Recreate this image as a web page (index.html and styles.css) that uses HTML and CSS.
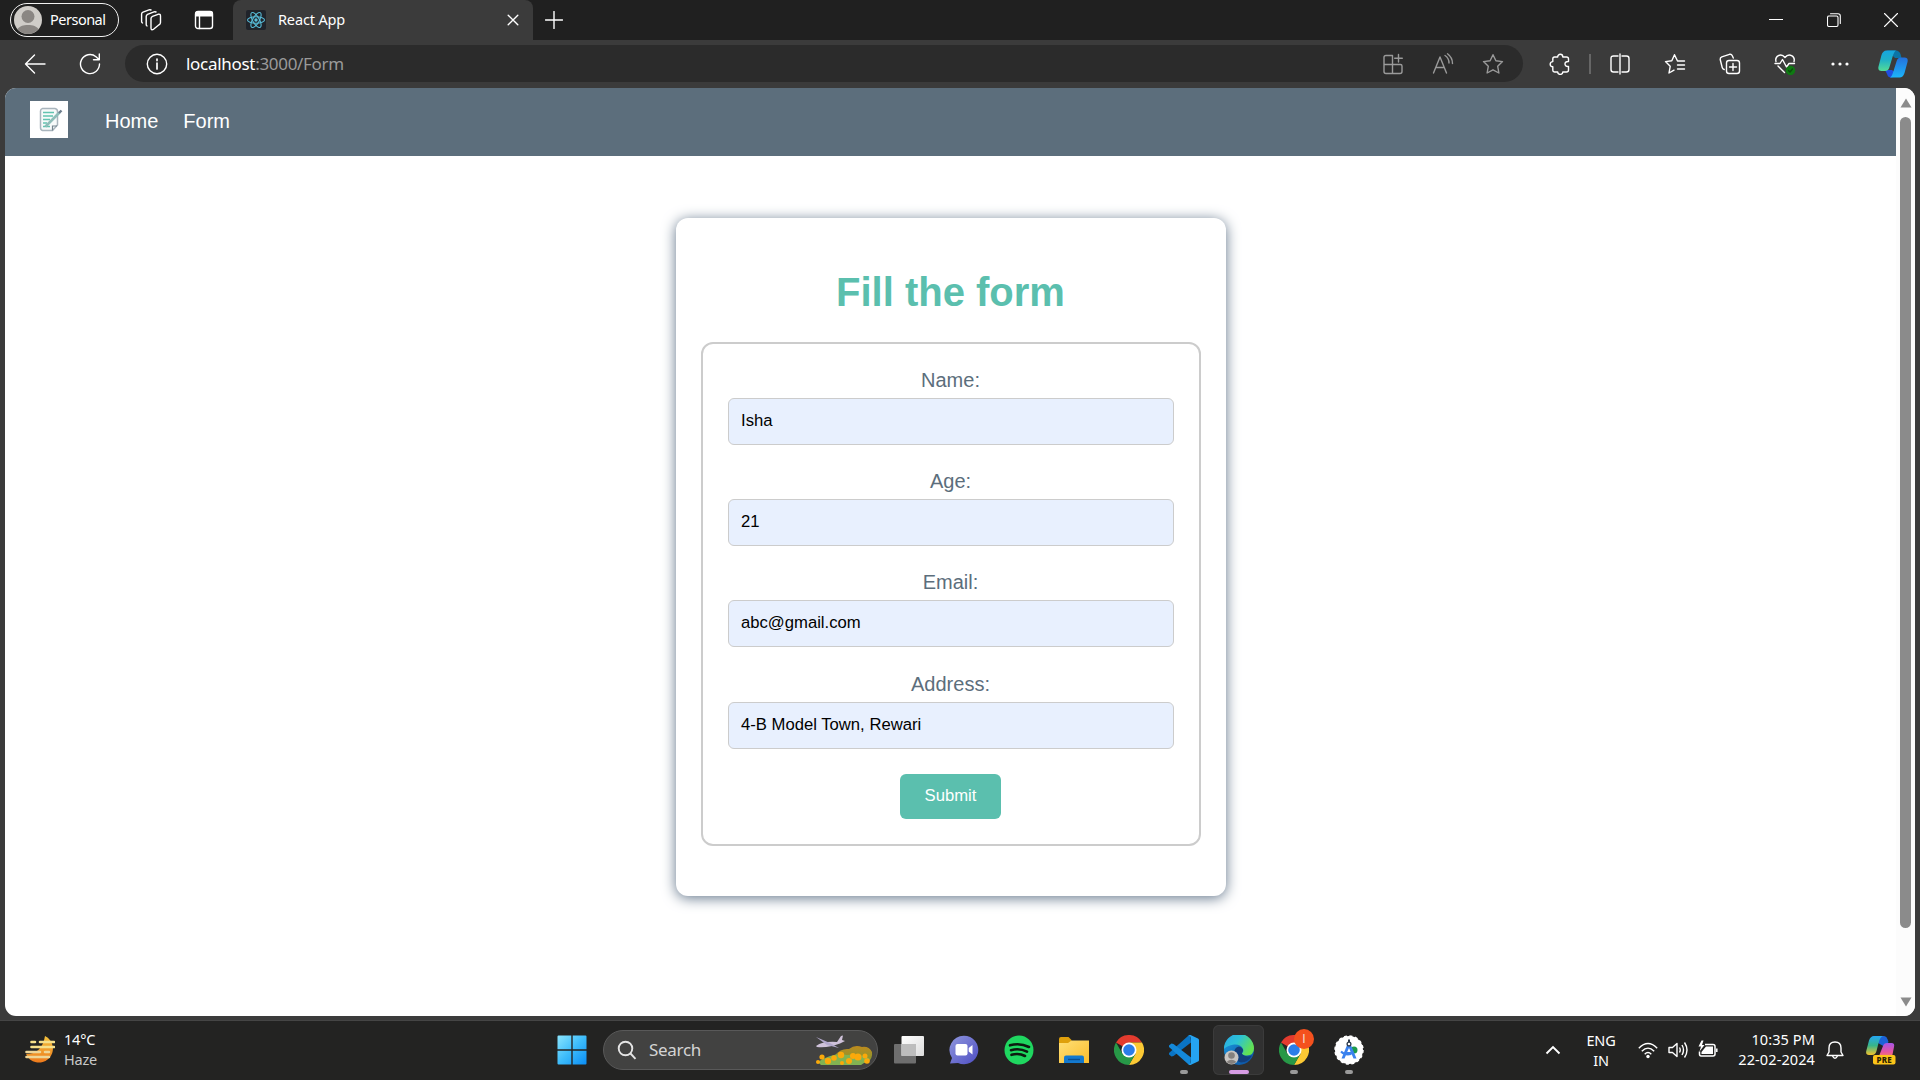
FILE: index.html
```html
<!DOCTYPE html>
<html lang="en">
<head>
<meta charset="utf-8">
<title>React App</title>
<link rel="stylesheet" href="styles.css">
</head>
<body>
<svg class="defs" width="0" height="0" aria-hidden="true">
  <defs>
    <linearGradient id="win" x1="0" y1="0" x2="1" y2="1"><stop offset="0" stop-color="#8be5fd"/><stop offset=".5" stop-color="#3dbcfb"/><stop offset="1" stop-color="#0a8df5"/></linearGradient>
    <linearGradient id="moon" x1="0" y1="0" x2="0" y2="1"><stop offset="0" stop-color="#f3c13c"/><stop offset="1" stop-color="#ee7a1c"/></linearGradient>
    <linearGradient id="hill" x1="0" y1="0" x2="0" y2="1"><stop offset="0" stop-color="#c08a1c"/><stop offset="1" stop-color="#7d9a34"/></linearGradient>
    <linearGradient id="front" x1="0" y1="0" x2="1" y2="1"><stop offset="0" stop-color="#fff"/><stop offset="1" stop-color="#dcdcdc"/></linearGradient>
    <linearGradient id="chat" x1="0" y1="0" x2="1" y2="1"><stop offset="0" stop-color="#8f96dc"/><stop offset="1" stop-color="#4e4ec4"/></linearGradient>
    <linearGradient id="folder" x1="0" y1="0" x2="1" y2="1"><stop offset="0" stop-color="#ffdf76"/><stop offset="1" stop-color="#fbbd2c"/></linearGradient>
    <linearGradient id="edgeTop" x1="0" y1="0" x2="1" y2=".5"><stop offset="0" stop-color="#2aa6e8"/><stop offset=".5" stop-color="#2cc3d5"/><stop offset="1" stop-color="#63e152"/></linearGradient>
    <linearGradient id="edgeLow" x1="0" y1="0" x2="1" y2="1"><stop offset="0" stop-color="#1b9de2"/><stop offset="1" stop-color="#0c4a9c"/></linearGradient>
    <linearGradient id="copA" x1="0" y1="0" x2="0" y2="1"><stop offset="0" stop-color="#16a5e0"/><stop offset=".45" stop-color="#1fb0c8"/><stop offset="1" stop-color="#54dc95"/></linearGradient>
    <linearGradient id="copB" x1="0" y1="0" x2="0" y2="1"><stop offset="0" stop-color="#2470dc"/><stop offset="1" stop-color="#1cb5fa"/></linearGradient>
    <linearGradient id="preA" x1="0" y1="0" x2="0" y2="1"><stop offset="0" stop-color="#25a8f4"/><stop offset=".5" stop-color="#37b58a"/><stop offset="1" stop-color="#f4c32c"/></linearGradient>
    <linearGradient id="preB" x1="0" y1="0" x2="0" y2="1"><stop offset="0" stop-color="#a556e8"/><stop offset=".6" stop-color="#e8559f"/><stop offset="1" stop-color="#f58a54"/></linearGradient>
    <symbol id="chrome" viewBox="0 0 30 30">
      <path d="M15 15 2 7.5A15 15 0 0 1 28 7.5H15Z" fill="#e33b2e"/>
      <path d="M15 7.5H28A15 15 0 0 1 15 30L21.5 18.8Z" fill="#fcc934"/>
      <path d="M2 7.5 8.5 18.8 15 22.5 21.5 18.8 15 30A15 15 0 0 1 2 7.5Z" fill="#279847"/>
      <circle cx="15" cy="15" r="7.5" fill="#fff"/><circle cx="15" cy="15" r="5.8" fill="#2b7de9"/>
    </symbol>
  </defs>
</svg>

<div class="screen">
  <header class="tabstrip">
    <div class="profile">
      <svg class="avatar" viewBox="0 0 28 28"><circle cx="14" cy="14" r="14" fill="#cfccc8"/><circle cx="14" cy="10.500" r="6.500" fill="#8a8683"/><path d="M3.500 23.200C6 17.500 22 17.500 24.500 23.200A14 14 0 0 1 3.500 23.200Z" fill="#8a8683"/></svg>
      <span class="profile-name">Personal</span>
    </div>
    <svg class="line-icon workspaces" viewBox="0 0 22 22"><path d="M11 9.500Q11 8 12.500 7.300L18 5.300Q20.500 4.700 20.500 7V13.500Q20.500 15 19 15.800L13.500 20.300Q11 21.500 11 19ZM7 17Q6.200 16.500 6.200 15.500V7.500Q6.200 6 7.500 5.300L14 2.800Q15 2.500 16 3M2.500 14Q1.600 13.500 1.600 12.500V5Q1.600 3.800 3 3.200L9 .9Q10 .6 11 1"/></svg>
    <svg class="line-icon vertical-tabs" viewBox="0 0 20 20"><rect x="1.500" y="1.500" width="17" height="17" rx="2.500"/><path d="M5.500 6V18.500"/><path d="M1 6.500V3.500Q1 1 3.500 1H16.500Q19 1 19 3.500V6.500Z" fill="#fff" stroke="none"/></svg>
    <div class="tab">
      <svg class="favicon" viewBox="0 0 20 20"><rect width="20" height="20" rx="2" fill="#20232a"/><g fill="none" stroke="#58bcd8" stroke-width="1.100"><ellipse cx="10" cy="10" rx="8.500" ry="3.300"/><ellipse cx="10" cy="10" rx="8.500" ry="3.300" transform="rotate(60 10 10)"/><ellipse cx="10" cy="10" rx="8.500" ry="3.300" transform="rotate(120 10 10)"/></g><circle cx="10" cy="10" r="1.700" fill="#58bcd8"/></svg>
      <span class="tab-title">React App</span>
      <svg class="line-icon tab-close" viewBox="0 0 12 12"><path d="M1.200 1.200 10.800 10.800M10.800 1.200 1.200 10.800"/></svg>
    </div>
    <svg class="line-icon new-tab" viewBox="0 0 18 18"><path d="M9 .5V17.500M.5 9H17.500"/></svg>
    <div class="window-buttons">
      <svg class="line-icon thin" viewBox="0 0 14 14"><path d="M0 6.500H14"/></svg>
      <svg class="line-icon thin" viewBox="0 0 14 14"><rect x=".5" y="3" width="10.500" height="10.500" rx="1.500"/><path d="M3.500 .7H11Q13.300 .7 13.300 3V10.500"/></svg>
      <svg class="line-icon thin" viewBox="0 0 14 14"><path d="M.5 .5 13.500 13.500M13.500 .5 .5 13.500"/></svg>
    </div>
  </header>

  <div class="toolbar">
    <svg class="line-icon nav-btn back" viewBox="0 0 22 22"><path d="M21 11H1.500M10.500 2 1.500 11 10.500 20"/></svg>
    <svg class="line-icon nav-btn reload" viewBox="0 0 22 22"><path d="M20.500 11A9.500 9.500 0 1 1 17 3.700L20 6.500M20.300 1V6.800H14.500"/></svg>
    <div class="address">
      <svg class="line-icon info" viewBox="0 0 22 22"><circle cx="11" cy="11" r="9.700"/><path d="M11 10V16M11 6V7.600" stroke-width="1.700"/></svg>
      <span class="url"><span class="host">localhost</span>:3000/Form</span>
      <div class="address-actions">
        <svg class="line-icon" viewBox="0 0 22 22"><path d="M10.500 2.500H4Q2 2.500 2 4.500V18.500Q2 20.500 4 20.500H18Q20 20.500 20 18.500V13Q20 11.500 18.500 11.500H2M10.500 2.500V20.500M16.500 1.500V9M12.700 5.200H20.300"/></svg>
        <svg class="line-icon" viewBox="0 0 22 22"><path d="M1.500 20 8 4 14.500 20M4 14.500H12M13 2.500Q17 5 17 10M15.500 .8Q20.500 4.500 20.500 10.500"/></svg>
        <svg class="line-icon" viewBox="0 0 22 22"><path d="M11 1.700 13.900 7.800 20.500 8.600 15.700 13.300 16.900 20 11 16.800 5.100 20 6.300 13.300 1.500 8.600 8.100 7.800Z"/></svg>
      </div>
    </div>
    <div class="actions">
      <svg class="line-icon ext" viewBox="0 0 22 22"><path d="M5.500 4H8.700C8.700 .4 13.800 .4 13.800 4H17.500Q19.500 4 19.500 6V8.500C14.800 8 14.800 14 19.500 13.500V17Q19.500 19 17.500 19H13.800C13.800 22.200 8.700 22.200 8.700 19H5.500Q3.800 19 3.800 17.300V13.800C.3 13.800 .3 8.600 3.800 8.600V6Q3.800 4 5.500 4Z"/></svg>
      <span class="divider"></span>
      <svg class="line-icon" viewBox="0 0 22 22"><path d="M9 3H4.500Q2 3 2 5.500V16.500Q2 19 4.500 19H9M13 3H17.500Q20 3 20 5.500V16.500Q20 19 17.500 19H13M11 1V21"/></svg>
      <svg class="line-icon" viewBox="0 0 22 22"><path d="M13.500 8 10.500 1.700 7.800 7.800 1.500 8.600 6.200 13.300 5 20 10 17.200M13.500 12H20.500M13.500 16H20.500M13.500 8H20.500"/></svg>
      <svg class="line-icon" viewBox="0 0 22 22"><rect x="7.500" y="7.500" width="13" height="13" rx="2.500"/><path d="M14 10.500V17.500M10.500 14H17.500M5.200 16.500Q3.500 16 3.200 14.500L1.200 6.500Q1 4.500 2.800 3.800L10.500 1.300Q12.500 .9 13.300 2.700L14.300 5"/></svg>
      <svg class="line-icon" viewBox="0 0 22 22"><path d="M2 8.500C.5 3 7 -.5 11 4.500 15 -.5 21.500 3 20 8.500M4 13 10.500 19.500M1 10.500H6L8.500 6.500 12.500 14 15 10.500H20.500"/><circle cx="16.500" cy="17.500" r="4.700" fill="#0f7a12" stroke="none"/><path d="M14.500 17.500 16 19 18.500 16" stroke="#0a4d0b"/></svg>
      <svg class="line-icon" viewBox="0 0 22 22"><g fill="#fff" stroke="none"><circle cx="4" cy="11" r="1.600"/><circle cx="11" cy="11" r="1.600"/><circle cx="18" cy="11" r="1.600"/></g></svg>
    </div>
    <svg class="copilot" viewBox="0 0 30 30"><path d="M9 1.500H18Q21 1.500 22.500 5L23.500 9H17Z" fill="#0b74a6"/><path d="M7 21H14L19 25Q16 28.500 13 28.500 10 28.500 9 25Z" fill="#2050e0"/><path d="M8.500 1.500H18Q16 2.500 14.500 8L11.500 18Q10.500 22 7 22H3.500Q-.5 22 .5 17.500L3.500 6Q5 1.500 8.500 1.500Z" fill="url(#copA)"/><path d="M21.500 28.500H12Q14 27.500 15.500 22L18.500 12.500Q19.500 8.500 23 8.500H26.500Q30.500 8.500 29.500 13L26.500 24Q25 28.500 21.500 28.500Z" fill="url(#copB)"/></svg>
  </div>

  <div class="viewport">
    <div class="page">
      <nav class="navbar">
        <svg class="logo" viewBox="0 0 38 37"><rect width="38" height="37" fill="#fff"/><path d="M12.500 7.500H25Q27.500 8 27.500 10.500V24L22.500 29.500H12.500Q10.500 29 10.500 26.500V10Q10.500 8 12.500 7.500Z" fill="#f7fafa" stroke="#a9b5bd" stroke-width="1.500"/><path d="M13 11.500H24M13 15H23M13 18.500H20M13 22H17M13 25.500H20" stroke="#62c3b0" stroke-width="1.500"/><path d="M15.500 25.500 29.500 11.500" stroke="#8fbdb9" stroke-width="2.600"/><path d="M29 12 31.500 9.500" stroke="#6c7d8c" stroke-width="2.400"/><path d="M22.500 29.500V25H27" fill="none" stroke="#75858f" stroke-width="1.200"/></svg>
        <a class="nav-link">Home</a>
        <a class="nav-link">Form</a>
      </nav>
      <main class="main">
        <section class="card">
          <h1 class="card-title">Fill the form</h1>
          <form class="form">
            <div class="field"><label class="label">Name:</label><div class="input">Isha</div></div>
            <div class="field"><label class="label">Age:</label><div class="input">21</div></div>
            <div class="field"><label class="label">Email:</label><div class="input">abc@gmail.com</div></div>
            <div class="field"><label class="label">Address:</label><div class="input">4-B Model Town, Rewari</div></div>
            <button class="submit" type="button">Submit</button>
          </form>
        </section>
      </main>
    </div>
    <div class="scrollbar">
      <svg class="arrow" viewBox="0 0 12 10"><path d="M6 .5 11.500 9.500H.5Z"/></svg>
      <span class="thumb"></span>
      <svg class="arrow" viewBox="0 0 12 10"><path d="M6 9.500 11.500 .5H.5Z"/></svg>
    </div>
  </div>

  <footer class="taskbar">
    <div class="weather">
      <svg class="weather-icon" viewBox="0 0 30 30"><path d="M20 1A14 14 0 1 1 1 19Q17 19 20 1Z" fill="url(#moon)"/><g stroke="#f6e08a" stroke-width="2.600" stroke-linecap="round"><path d="M6.500 7H10M15 7H29M6.500 12H29"/><path d="M1.500 17H15M20 17H24M1.500 22H24" stroke="#eed596"/></g></svg>
      <div class="weather-text"><span class="temp">14°C</span><span class="cond">Haze</span></div>
    </div>
    <div class="dock">
      <div class="slot start"><svg class="app" viewBox="0 0 30 30"><path d="M.5 1.500Q.5.5 1.500.5H14.300V14.300H.5ZM15.700.5H28.500Q29.500.5 29.500 1.500V14.300H15.700ZM.5 15.700H14.300V29.500H1.500Q.5 29.500.5 28.500ZM15.700 15.700H29.500V28.500Q29.500 29.500 28.500 29.500H15.700Z" fill="url(#win)"/></svg></div>
      <div class="search">
        <svg class="search-icon" viewBox="0 0 20 20"><circle cx="8.500" cy="8.500" r="6.800"/><path d="M13.500 13.500 18.500 18.800"/></svg>
        <span class="search-text">Search</span>
        <svg class="search-art" viewBox="0 0 58 32"><path d="M20 21Q26 14 34 15 40 10 47 13 54 12 57 18 58 25 52 29L22 28Z" fill="url(#hill)"/><path d="M3 28Q18 18 32 21 46 19 55 25L46 31H6Z" fill="#82b352"/><g fill="#fba90a"><circle cx="7" cy="23" r="2.600"/><circle cx="3" cy="28" r="2"/><circle cx="13" cy="27" r="3.200"/><circle cx="19" cy="24" r="2.800"/><circle cx="26" cy="21" r="3.200"/><circle cx="27" cy="29" r="2"/><circle cx="34" cy="27" r="3"/><circle cx="38" cy="22" r="3"/><circle cx="43" cy="23" r="3.500"/><circle cx="50" cy="22" r="2.500"/><circle cx="52" cy="27" r="2.800"/></g><path d="M1 12Q8 7 22 8L26 2 28 1.500 27 6 30 7 25 9.500Q14 14 2 13Z" fill="#cfc2da"/><path d="M1 3 15 9 24 14 12 11Z" fill="#b3a9cc"/></svg>
      </div>
      <div class="slot"><svg class="app" viewBox="0 0 30 30"><rect y="9" width="22" height="19.500" rx="1" fill="#6e6e6e"/><rect x="7.500" y="1" width="22.500" height="20" rx="1" fill="url(#front)"/><rect x="7.500" y="9" width="14.500" height="12" fill="#bdbdbd"/></svg></div>
      <div class="slot"><svg class="app" viewBox="0 0 30 30"><path d="M15 .7A14.300 14.300 0 1 1 9 28L1 28.500 3 23A14.300 14.300 0 0 1 15 .7Z" fill="url(#chat)"/><rect x="6.500" y="9" width="12" height="11.500" rx="2" fill="#fff"/><path d="M19.700 13 23.500 10V19.500L19.700 16.500Z" fill="#fff"/></svg></div>
      <div class="slot"><svg class="app" viewBox="0 0 30 30"><circle cx="15" cy="15" r="14.500" fill="#1fd760"/><path d="M6 10.300Q16 7.500 25 12M7 15.200Q15.500 12.800 23 16.700M7.500 19.800Q15 17.800 21 21" fill="none" stroke="#0d1a10" stroke-width="2.600" stroke-linecap="round"/></svg></div>
      <div class="slot"><svg class="app" viewBox="0 0 30 30"><path d="M0 4Q0 2 2 2H9.500L12.500 5V10H0Z" fill="#dfa00c"/><path d="M0 8H9L12.500 5.500H30V28H0Z" fill="url(#folder)"/><path d="M5 28V22.500Q5 20.500 7 20.500H23Q25 20.500 25 22.500V28Z" fill="#1379cf"/><path d="M9 24.500H21" stroke="#0b4f92" stroke-width="1.400"/></svg></div>
      <div class="slot"><svg class="app"><use href="#chrome"/></svg></div>
      <div class="slot running"><svg class="app" viewBox="0 0 30 30"><path d="M21.500 0 22 7.500 4.500 21 2.500 21.500 0 19.500V18L19 1Z" fill="#0a74c4"/><path d="M21.500 30 22 22.500 4.500 9 2.500 8.500 0 10.500V12L19 29Z" fill="#1489da"/><path d="M21.500 0 29 3.500Q30 4 30 5V25Q30 26 29 26.500L21.500 30Q20 30 19 29 22 29.500 22 27V3Q22 .5 19 1 20 0 21.500 0Z" fill="#25a4f2"/></svg></div>
      <div class="slot active"><svg class="app" viewBox="0 0 30 30"><circle cx="15" cy="15" r="15" fill="url(#edgeLow)"/><path d="M0 14A15 15 0 0 1 30 13.500Q30 20 23 20.500 18 20.500 18 18.500 20 17 19 14 17 9 10 9.500 3 10.500 0 14Z" fill="url(#edgeTop)"/><path d="M10 19Q10 12 15 11.500 19.500 13 19 16 17.500 17.500 18 19 22 23 28 20.500 24 27.500 17 27.500 11 26 10 19Z" fill="#123f7d"/><circle cx="7.500" cy="22.500" r="7" fill="#c8c5c2"/><circle cx="7.500" cy="20.500" r="3.300" fill="#85817e"/><path d="M2.500 27Q7.500 22.500 12.500 27 7.500 31 2.500 27Z" fill="#85817e"/></svg></div>
      <div class="slot running"><svg class="app"><use href="#chrome"/></svg><span class="badge"><span class="badge-text">I</span></span></div>
      <div class="slot running"><svg class="app" viewBox="0 0 30 30"><circle cx="15" cy="15" r="14" fill="#fff" stroke="#fff" stroke-width="1.500" stroke-dasharray="3 2.500"/><circle cx="20" cy="15" r="3.500" fill="#1c9a4c"/><path d="M13.500 9H16.500L22.500 23.500H19.500L17.800 19.500H12.200L10.500 23.500H7.500ZM15 13 13.200 17H16.800Z" fill="#3b82ee" fill-rule="evenodd"/><path d="M7 16.500Q11 20.500 17 19" fill="none" stroke="#3b82ee" stroke-width="2"/><circle cx="15" cy="9" r="1.900" fill="#fff" stroke="#2d3a4a" stroke-width="1.300"/><path d="M15 4.500V7" stroke="#2d3a4a" stroke-width="2"/></svg></div>
    </div>
    <div class="tray">
      <svg class="chevron" viewBox="0 0 16 10"><path d="M1.500 8.500 8 2 14.500 8.500"/></svg>
      <div class="lang"><span>ENG</span><span>IN</span></div>
      <svg class="tray-icon" viewBox="0 0 20 20"><path d="M.8 8.200Q10-1 19.200 8.200M3.800 11.300Q10 5 16.200 11.300M6.700 14.200Q10 10.800 13.300 14.200"/><circle cx="10" cy="16.500" r="1.700" fill="#fff" stroke="none"/></svg>
      <svg class="tray-icon" viewBox="0 0 20 20"><path d="M1 7.500H4.500L9 3.500V16.500L4.500 12.500H1ZM11.500 7.500Q13 10 11.500 12.500M14 5Q17 10 14 15M16.500 2.500Q21.500 10 16.500 17.500"/></svg>
      <svg class="tray-icon" viewBox="0 0 20 20"><path d="M7 4.500H15Q17 4.500 17 6.500V14Q17 16 15 16H3Q1.500 16 1.500 14V11.500M18.800 8.500V12" stroke-width="1.500"/><path d="M8 6.500H15V14H3.500V12Z" fill="#fff" stroke="none"/><path d="M3.500 .5 .5 6.500H3L1.500 11.500 6.500 5H4L5.500 .5Z" fill="#fff" stroke="none"/></svg>
      <div class="clock"><span>10:35 PM</span><span>22-02-2024</span></div>
      <svg class="tray-icon bell" viewBox="0 0 18 20"><path d="M3 12V8Q3 2 9 2 15 2 15 8V12L17 15.500H1ZM6.500 16Q9 20.500 11.500 16"/></svg>
      <svg class="pre" viewBox="0 0 30 30"><path d="M9 1H18Q21 1 22.500 7L19 12 12 8Z" fill="#1c62d8"/><path d="M8 1H17Q14 2 12.500 8L10.500 16Q9.500 20 6 20H3Q-1 20 .5 15L3 5.500Q4.500 1 8 1Z" fill="url(#preA)"/><path d="M11 23Q14 20 15 16L17 11Q18 8 21 8H25.500Q29 8 28 12L26 22Z" fill="url(#preB)"/><rect x="7" y="20" width="22.500" height="9.500" rx="2" fill="#fcc419"/><text x="18.300" y="27.700" text-anchor="middle" class="pre-text">PRE</text></svg>
    </div>
  </footer>
</div>
</body>
</html>
```
FILE: styles.css
```css
* { box-sizing: border-box; }
body { margin: 0; background: #3b3b3b; font-family: "Noto Sans", "Open Sans", sans-serif; }
svg { display: block; flex: none; }
.defs { position: absolute; }
.screen { width: 1920px; height: 1080px; display: flex; flex-direction: column; overflow: hidden; }
.line-icon { width: 22px; height: 22px; fill: none; stroke: #fff; stroke-width: 1.400; stroke-linejoin: round; stroke-linecap: round; }

/* Tab strip */
.tabstrip { height: 40px; background: #202020; display: flex; align-items: center; padding-left: 10px; flex: none; }
.profile { width: 109px; height: 34px; border: 1.500px solid #f0f0f0; border-radius: 17px; display: flex; align-items: center; gap: 8px; padding-left: 3px; }
.avatar { width: 28px; height: 28px; }
.profile-name { color: #fff; font-size: 14.500px; letter-spacing: -.5px; margin-bottom: 2px; }
.workspaces { margin-left: 21px; }
.vertical-tabs { width: 20px; height: 20px; margin-left: 32px; }
.tab { width: 300px; height: 40px; margin-left: 19px; background: #3b3b3b; border-radius: 8px 8px 0 0; display: flex; align-items: center; padding: 0 14px 0 13px; }
.favicon { width: 20px; height: 20px; }
.tab-title { margin: 0 0 2px 12px; color: #fff; font-size: 14.500px; letter-spacing: -.15px; flex: 1; }
.tab-close { width: 12px; height: 12px; }
.new-tab { width: 18px; height: 18px; margin-left: 12px; }
.window-buttons { margin-left: auto; display: flex; gap: 43.500px; padding-right: 22px; }
.thin { width: 14px; height: 14px; stroke-width: 1.100; }

/* Toolbar */
.toolbar { height: 48px; background: #3b3b3b; display: flex; align-items: center; padding-left: 24px; flex: none; }
.nav-btn { margin-bottom: 1px; }
.reload { margin-left: 33px; }
.address { width: 1398px; height: 37px; margin: 0 0 1px 24px; background: #2b2b2b; border-radius: 19px; display: flex; align-items: center; padding-left: 21px; }
.url { color: #9a9a9a; font-size: 17px; letter-spacing: -.3px; margin-left: 18px; }
.host { color: #fff; }
.address-actions { margin-left: auto; display: flex; gap: 28px; padding-right: 19px; }
.address-actions .line-icon { stroke: #9a9a9a; }
.actions { display: flex; align-items: center; gap: 33px; margin-left: 26px; margin-bottom: 1px; }
.divider { width: 2px; height: 20px; background: #666; margin: 0 -15px; }
.copilot { width: 30px; height: 30px; margin-left: 27px; }

/* Browser viewport */
.viewport { height: 928px; margin: 0 5px; background: #fff; border-radius: 11px; overflow: hidden; display: flex; flex: none; }
.page { flex: 1; font-family: "Liberation Sans", Arial, sans-serif; }
.navbar { height: 68px; background: #5c6e7c; display: flex; align-items: flex-start; padding: 13px 25px 0; }
.logo { width: 38px; height: 37px; margin-right: 37px; }
.nav-link { color: #fff; font-size: 20px; line-height: 23px; margin: 9px 25px 0 0; }
.main { display: flex; justify-content: center; padding-top: 62px; }
.card { width: 550px; height: 678px; border-radius: 12px; background: #fff; box-shadow: 0 2px 14px #62758a; padding: 0 25px; }
.card-title { margin: 51px 0 27px; color: #5bbfae; font-size: 40px; line-height: 46px; text-align: center; }
.form { height: 504px; border: 2px solid #ccc; border-radius: 12px; padding: 24px 25px 0; display: flex; flex-direction: column; align-items: center; }
.field { width: 100%; height: 101.200px; }
.label { display: block; color: #5c6e7c; font-size: 20px; line-height: 25px; text-align: center; margin-bottom: 5px; }
.input { height: 47px; border: 1px solid #ccc; border-radius: 6px; background: #e8f0fe; color: #000; font-size: 16.670px; line-height: 43px; padding-left: 12.500px; }
.submit { width: 101px; height: 45px; margin-top: 1px; border: 0; border-radius: 6px; background: #5bbfae; color: #fff; font: 16.670px/43px "Liberation Sans", Arial, sans-serif; padding: 0 0 2px; }
.scrollbar { width: 19px; background: #fcfcfc; display: flex; flex-direction: column; align-items: center; padding: 10px 0 9px; }
.arrow { width: 12px; height: 10px; fill: #8b8b8b; }
.thumb { width: 11px; height: 811px; margin: 9px 0 auto; border-radius: 6px; background: #8b8b8b; }

/* Taskbar */
.taskbar { height: 60px; margin-top: auto; background: #232322; border-top: 1px solid #454545; display: flex; flex: none; color: #fff; font-size: 14.500px; line-height: 20px; padding-bottom: 2px; }
.weather { width: 529px; display: flex; align-items: center; padding-left: 25px; gap: 9px; letter-spacing: -.2px; }
.weather-icon { width: 30px; height: 30px; }
.weather-text, .lang, .clock { display: flex; flex-direction: column; }
.weather-text { margin-bottom: 2px; }
.cond { color: #c8c8c8; }
.dock { display: flex; align-items: center; }
.slot { width: 51px; height: 50px; margin-right: 4px; border-radius: 6px; display: flex; align-items: center; justify-content: center; position: relative; }
.start { width: 74px; margin-right: 0; padding-left: 13px; }
.start .app { margin-right: 2px; }
.app { width: 30px; height: 30px; }
.search { width: 275px; height: 40px; border: 1px solid #595959; border-radius: 20px; background: #424241; display: flex; align-items: center; padding: 0 4px 0 13px; margin-right: 5px; }
.search-icon { width: 20px; height: 20px; fill: none; stroke: #e4e4e4; stroke-width: 1.900; }
.search-text { color: #d4d4d4; font-size: 17px; margin-left: 12px; letter-spacing: -.3px; flex: 1; }
.search-art { width: 58px; height: 32px; }
.active { background: #313131; box-shadow: inset 0 0 0 1px #3b3b3b; }
.running::after, .active::after { content: ""; position: absolute; left: 50%; bottom: 1px; width: 8px; height: 4px; margin-left: -4px; border-radius: 2px; background: #9a9a9a; }
.active::after { width: 20px; margin-left: -10px; background: #d79ce4; }
.badge { position: absolute; left: 26px; top: 4px; width: 20px; height: 20px; border-radius: 10px; background: #f4511e; color: #f6d9cf; font: 12px/20px "Liberation Sans", Arial, sans-serif; text-align: center; }
.tray { margin-left: auto; display: flex; align-items: center; padding-right: 24px; letter-spacing: -.15px; }
.chevron { width: 16px; height: 10px; fill: none; stroke: #fff; stroke-width: 1.900; margin-right: 25px; }
.lang { width: 30px; align-items: center; margin-right: 22px; }
.tray-icon { width: 20px; height: 20px; fill: none; stroke: #fff; stroke-width: 1.400; stroke-linejoin: round; margin-right: 10px; }
.clock { width: 87px; align-items: flex-end; margin-bottom: 2px; letter-spacing: .1px; }
.bell { width: 18px; margin: 0 22px 0 11px; }
.pre { width: 30px; height: 30px; }
.pre-text { font: 800 8px "Noto Sans", sans-serif; fill: #2a2000; letter-spacing: .2px; }
```
